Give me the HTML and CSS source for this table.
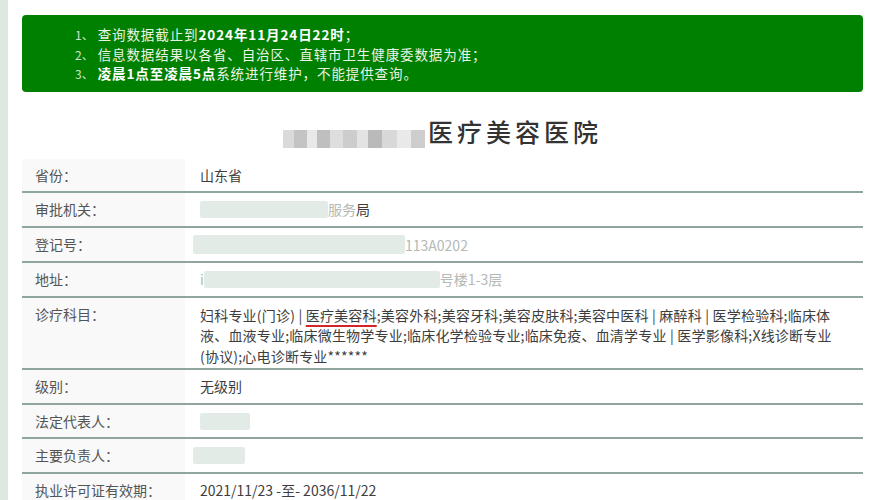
FILE: index.html
```html
<!DOCTYPE html>
<html lang="zh-CN">
<head>
<meta charset="utf-8">
<title>医疗美容医院</title>
<link rel="stylesheet" href="styles.css">
</head>
<body>
<div class="strip"></div>
<main class="page">
  <div class="notice">
    <p><span class="num">1、</span>查询数据截止到<b>2024年11月24日22时</b>；</p>
    <p><span class="num">2、</span>信息数据结果以各省、自治区、直辖市卫生健康委数据为准；</p>
    <p><span class="num">3、</span><b>凌晨1点至凌晨5点</b>系统进行维护，不能提供查询。</p>
  </div>

  <h1 class="title"><span class="mosaic"></span>医疗美容医院</h1>

  <div class="table">
    <div class="row">
      <div class="label">省份：</div>
      <div class="value">山东省</div>
    </div>
    <div class="row">
      <div class="label">审批机关：</div>
      <div class="value"><span class="redact r1"></span><span class="faint">服务</span>局</div>
    </div>
    <div class="row">
      <div class="label">登记号：</div>
      <div class="value"><span class="redact r2"></span><span class="faint">113A0202</span></div>
    </div>
    <div class="row">
      <div class="label">地址：</div>
      <div class="value"><span class="faint">i</span><span class="redact r3"></span><span class="faint">号楼1-3层</span></div>
    </div>
    <div class="row">
      <div class="label">诊疗科目：</div>
      <div class="value wide">妇科专业(门诊) | <span class="mark">医疗美容科</span>;美容外科;美容牙科;美容皮肤科;美容中医科 | 麻醉科 | 医学检验科;临床体液、血液专业;临床微生物学专业;临床化学检验专业;临床免疫、血清学专业 | 医学影像科;X线诊断专业 (协议);心电诊断专业******</div>
    </div>
    <div class="row">
      <div class="label">级别：</div>
      <div class="value">无级别</div>
    </div>
    <div class="row">
      <div class="label">法定代表人：</div>
      <div class="value"><span class="redact r4"></span></div>
    </div>
    <div class="row">
      <div class="label">主要负责人：</div>
      <div class="value"><span class="redact r5"></span></div>
    </div>
    <div class="row last">
      <div class="label">执业许可证有效期：</div>
      <div class="value">2021/11/23 -至- 2036/11/22</div>
    </div>
  </div>
</main>
</body>
</html>
```

FILE: styles.css
```css
* { box-sizing: border-box; }

html, body {
  margin: 0;
  padding: 0;
  background: #ffffff;
  font-family: "Noto Sans CJK SC", "Noto Sans", sans-serif;
}

body {
  display: flex;
  min-height: 500px;
}

.strip {
  width: 8px;
  flex: 0 0 8px;
  background: #dfe8de;
}

.page {
  flex: 1;
  padding: 15px 22px 0 14px;
}

.notice {
  background: #008000;
  border-radius: 4px;
  padding: 10px 0 8px 53px;
  color: #eaf4e6;
  font-size: 13.5px;
  line-height: 19.5px;
}

.notice p {
  margin: 0;
  letter-spacing: 0.9px;
}

.notice .num {
  color: #cfe3cc;
  font-size: 12px;
  letter-spacing: 0;
  margin-right: 4px;
}

.notice b {
  font-weight: 700;
  color: #ffffff;
}

.title {
  margin: 22px 0 11px;
  text-align: center;
  font-size: 25px;
  line-height: 34px;
  font-weight: 500;
  color: #333333;
  letter-spacing: 4px;
}

.mosaic {
  display: inline-block;
  vertical-align: -6px;
  width: 142px;
  height: 18px;
  margin-right: 3px;
  background:
    linear-gradient(90deg,
      #d6d6d6 0 8%, #bdbdbd 8% 17%, #e6e6e6 17% 24%, #b8b8b8 24% 33%,
      #dadada 33% 42%, #c7c7c7 42% 52%, #e0e0e0 52% 60%, #b2b2b2 60% 70%,
      #d4d4d4 70% 80%, #e7e7e7 80% 90%, #c8c8c8 90% 100%);
  box-shadow: 0 -11px 0 -10px #c8dcc8;
  opacity: 0.9;
}

.table {
  font-size: 14px;
  line-height: 19.5px;
}

.row {
  display: flex;
  border-bottom: 2px solid #8fa69d;
}

.row.last {
  border-bottom: none;
}

.label {
  flex: 0 0 163px;
  padding: 7px 0 6px 13px;
  background: #f8f9f8;
  color: #555555;
}

.value {
  flex: 1;
  padding: 7px 18px 6px 15px;
  color: #3d3d3d;
}

.value.wide {
  letter-spacing: 0.2px;
  line-height: 20.5px;
  padding-bottom: 2px;
}

.mark {
  text-decoration: underline 2px #d3242a;
  text-underline-offset: 4px;
}

.redact {
  display: inline-block;
  vertical-align: -3px;
  height: 17px;
  background: #e3ebe6;
  border-radius: 2px;
}

.r1 { width: 128px; }
.r2 { width: 212px; margin-left: -7px; height: 19px; }
.r3 { width: 236px; }
.r4 { width: 50px; }
.r5 { width: 52px; margin-left: -7px; }

.faint {
  color: #b4b9b6;
}
```
